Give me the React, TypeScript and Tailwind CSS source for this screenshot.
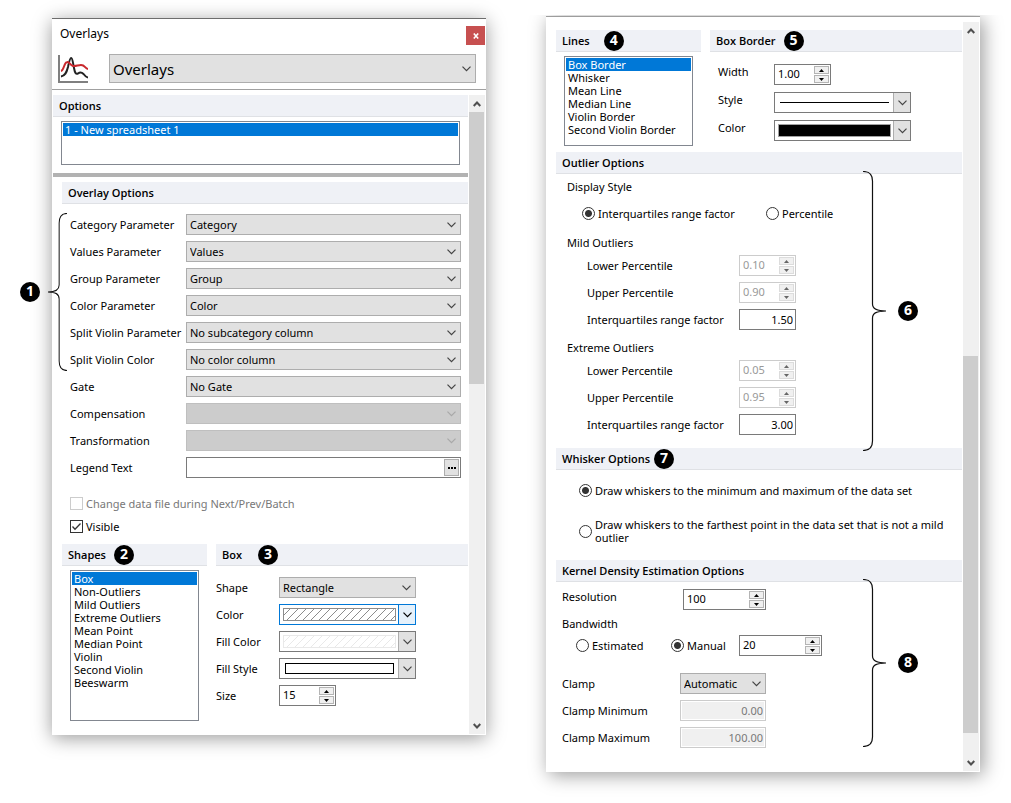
import { useId, type ReactNode } from "react";
import clsx from "clsx";

const SHAPES = [
  "Box",
  "Non-Outliers",
  "Mild Outliers",
  "Extreme Outliers",
  "Mean Point",
  "Median Point",
  "Violin",
  "Second Violin",
  "Beeswarm",
];

const LINES = ["Box Border", "Whisker", "Mean Line", "Median Line", "Violin Border", "Second Violin Border"];

const OVERLAY_FIELDS = [
  { label: "Category Parameter", value: "Category" },
  { label: "Values Parameter", value: "Values" },
  { label: "Group Parameter", value: "Group" },
  { label: "Color Parameter", value: "Color" },
  { label: "Split Violin Parameter", value: "No subcategory column" },
  { label: "Split Violin Color", value: "No color column" },
  { label: "Gate", value: "No Gate" },
  { label: "Compensation", value: "", disabled: true },
  { label: "Transformation", value: "", disabled: true },
];

function Chevron({ className }: { className?: string }) {
  return (
    <svg width="9" height="6" viewBox="0 0 9 6" fill="none" className={clsx("pointer-events-none", className)}>
      <path d="M.5 .7 4.5 4.7 8.5 .7" stroke="currentColor" strokeWidth="1.2" />
    </svg>
  );
}

function Badge({ n, className }: { n: number; className?: string }) {
  return (
    <span
      className={clsx(
        "flex h-5 w-5 shrink-0 items-center justify-center rounded-full bg-black pb-[2px] font-['Open_Sans',sans-serif] text-[14px] leading-4 font-bold text-white",
        className
      )}
    >
      {n}
    </span>
  );
}

function Brace({ height, flip }: { height: number; flip?: boolean }) {
  const mid = height / 2;
  const d = `M0 .5C7 .5 9.5 4 9.5 10V${mid - 7}C9.5 ${mid - 2} 14 ${mid} 23 ${mid}C14 ${mid} 9.5 ${mid + 2} 9.5 ${mid + 7}V${height - 10}C9.5 ${height - 4} 7 ${height - 0.5} 0 ${height - 0.5}`;
  return (
    <svg
      width={flip ? 19 : 23}
      height={height}
      viewBox={`0 0 23 ${height}`}
      preserveAspectRatio="none"
      fill="none"
      className={clsx("shrink-0", flip && "-scale-x-100")}
    >
      <path d={d} stroke="#111" strokeWidth="1.2" />
    </svg>
  );
}

function Heading({ children, badge, gap = "ml-2" }: { children: ReactNode; badge?: number; gap?: string }) {
  return (
    <div className="flex h-[22px] items-center border-b border-[#dfe1e5] bg-[#eff1f6] pl-[6px]">
      <h2 className="font-['Open_Sans',sans-serif] font-semibold">{children}</h2>
      {badge && <Badge n={badge} className={gap} />}
    </div>
  );
}

function Select({ id, value, disabled, className }: { id: string; value: string; disabled?: boolean; className?: string }) {
  return (
    <div className={clsx("relative", className)}>
      <select
        id={id}
        disabled={disabled}
        className="block h-[21px] w-full appearance-none border border-[#adadad] bg-[#e1e1e1] pl-[3px] leading-4 text-black opacity-100 disabled:border-[#bfbfbf] disabled:bg-[#ccc]"
      >
        <option>{value}</option>
      </select>
      <Chevron className={clsx("absolute top-2 right-[5px]", disabled ? "text-[#a8a8a8]" : "text-[#444]")} />
    </div>
  );
}

function ListBox({ label, items, className }: { label: string; items: string[]; className?: string }) {
  return (
    <select
      aria-label={label}
      size={items.length + 1}
      defaultValue={items[0]}
      className={clsx("block overflow-hidden border border-[#828790] bg-white p-px", className)}
    >
      {items.map((item) => (
        <option
          key={item}
          className="flex h-[13px] min-h-0 items-center overflow-visible px-[2px] py-0 leading-[13px] checked:bg-[linear-gradient(#0078d7,#0078d7)] checked:[-webkit-text-fill-color:#fff]"
        >
          {item}
        </option>
      ))}
    </select>
  );
}

function SpinButton({ up, disabled }: { up?: boolean; disabled?: boolean }) {
  return (
    <button
      type="button"
      aria-label={up ? "Increase" : "Decrease"}
      disabled={disabled}
      className={clsx(
        "flex h-2 w-[15px] items-center justify-center border bg-[#f0f0f0]",
        disabled ? "border-[#dcdcdc] text-[#666]" : "border-[#b4b4b4] text-black"
      )}
    >
      <svg width="5" height="3" viewBox="0 0 5 3" fill="currentColor">
        <path d={up ? "M0 3 2.5 0 5 3Z" : "M0 0 2.5 3 5 0Z"} />
      </svg>
    </button>
  );
}

function Spin({ id, label, value, disabled, className }: { id?: string; label?: string; value: string; disabled?: boolean; className?: string }) {
  return (
    <div
      className={clsx(
        "flex h-[21px] items-center border bg-white pr-px",
        disabled ? "border-[#ccc] text-[#999]" : "border-[#7a7a7a]",
        className
      )}
    >
      <input
        id={id}
        aria-label={label}
        defaultValue={value}
        disabled={disabled}
        className="w-0 min-w-0 flex-1 pb-px pl-[3px] leading-4 outline-none"
      />
      <div className="flex flex-col gap-px">
        <SpinButton up disabled={disabled} />
        <SpinButton disabled={disabled} />
      </div>
    </div>
  );
}

function DropSwatch({ id, active, children }: { id: string; active?: boolean; children: ReactNode }) {
  return (
    <button
      id={id}
      type="button"
      className={clsx("flex h-[21px] w-[137px] border bg-white", active ? "border-[#0078d7]" : "border-[#7a7a7a]")}
    >
      <span className="flex h-full flex-1 items-center justify-center">{children}</span>
      <span
        className={clsx(
          "flex h-full w-[17px] items-center justify-center border-l",
          active ? "border-[#0078d7] bg-[#e5f1fb] text-black" : "border-[#adadad] bg-[#e1e1e1] text-[#444]"
        )}
      >
        <Chevron />
      </span>
    </button>
  );
}

function Hatch({ color }: { color: string }) {
  const pattern = useId();
  return (
    <svg width="113" height="13" viewBox="0 0 113 13">
      <defs>
        <pattern id={pattern} width="8" height="8" patternUnits="userSpaceOnUse">
          <path d="M-1 9 9-1M-1 1 1-1M7 9 9 7" stroke={color} strokeWidth="1" />
        </pattern>
      </defs>
      <rect x=".5" y=".5" width="112" height="12" fill={`url(#${pattern})`} stroke={color} />
    </svg>
  );
}

function Radio({ name, children, checked, className }: { name: string; children: ReactNode; checked?: boolean; className?: string }) {
  return (
    <label className={clsx("flex items-center gap-[3px] leading-[13px]", className)}>
      <input
        type="radio"
        name={name}
        defaultChecked={checked}
        className="h-[13px] w-[13px] shrink-0 appearance-none rounded-full border border-[#333] bg-white checked:bg-[radial-gradient(circle,#333_3px,#fff_4px)]"
      />
      <span>{children}</span>
    </label>
  );
}

function Field({ label, id, width, top, children }: { label: string; id: string; width: string; top?: boolean; children: ReactNode }) {
  return (
    <div className={clsx("flex", top ? "items-start" : "items-center")}>
      <label htmlFor={id} className={clsx("shrink-0 leading-4 whitespace-nowrap", width)}>
        {label}
      </label>
      {children}
    </div>
  );
}

function ScrollBar({ before, thumb, after }: { before: string; thumb: string; after: string }) {
  return (
    <div className="mr-px ml-px flex w-4 shrink-0 flex-col bg-[#f0f0f0]">
      <button type="button" aria-label="Scroll up" className="flex h-[17px] w-full items-center justify-center">
        <svg width="8" height="6" viewBox="0 0 8 6" fill="none">
          <path d="M.7 5 4 1.5 7.3 5" stroke="#505050" strokeWidth="2" />
        </svg>
      </button>
      <div className={before} />
      <div className={clsx("mr-px bg-[#cdcdcd]", thumb)} />
      <div className={after} />
      <button type="button" aria-label="Scroll down" className="flex h-[17px] w-full items-center justify-center">
        <svg width="8" height="6" viewBox="0 0 8 6" fill="none">
          <path d="M.7 1 4 4.5 7.3 1" stroke="#505050" strokeWidth="2" />
        </svg>
      </button>
    </div>
  );
}

function OverlayIcon() {
  return (
    <svg width="30" height="28" viewBox="0 0 30 28" fill="none" className="shrink-0">
      <path d="M1 0V27H30" stroke="#808080" strokeWidth="2" />
      <path
        d="M3 21.5C7 21 8.5 18 10 12C11 7 12 3 13.2 3C14.5 3 15 8 16 13C17 18.5 18 19.5 20 18.5C22 17 24 17.5 25.5 19C27 21 28 22 30 22.5"
        stroke="#222"
        strokeWidth="2"
      />
      <path d="M3 16C6 15.5 6 7.5 9 7C11.5 6.5 12 10.5 15 11C18 11.5 20 10 23 10C27 10 27 13.5 30 14" stroke="#c8282d" strokeWidth="2" />
    </svg>
  );
}

function OverlaysPanel() {
  return (
    <section className="mt-[18px] min-w-0 flex-1 border-t border-[#6d6d6d] bg-white pb-px shadow-[0_3px_18px_rgba(0,0,0,0.4)]">
      <header className="border-b border-[#a0a0a0] pt-[7px] pb-[6px]">
        <div className="flex justify-between pr-px pl-2">
          <h1 className="text-[12px] leading-4">Overlays</h1>
          <button
            type="button"
            aria-label="Close"
            className="flex h-[19px] w-[19px] items-center justify-center bg-[#c75050] text-white"
          >
            <svg width="6" height="6" viewBox="0 0 6 6" fill="none">
              <path d="M.8 .5 5.2 5.5M5.2 .5 .8 5.5" stroke="currentColor" strokeWidth="1.6" />
            </svg>
          </button>
        </div>
        <div className="mt-[9px] flex items-center pr-[10px] pl-[6px]">
          <OverlayIcon />
          <div className="relative ml-[21px] flex-1">
            <select
              aria-label="Item"
              className="block h-[29px] w-full appearance-none border border-[#adadad] bg-[#e1e1e1] pl-[3px] text-[15px] leading-5"
            >
              <option>Overlays</option>
            </select>
            <Chevron className="absolute top-3 right-[5px] text-[#444]" />
          </div>
        </div>
      </header>

      <div className="flex pt-[5px] pl-px">
        <div className="min-w-0 flex-1">
          <Heading>Options</Heading>
          <div className="mx-2 mt-1">
            <ListBox label="Options" items={["1 - New spreadsheet 1"]} className="h-11 w-full" />
          </div>
          <div className="mt-2 h-1 bg-[#b2b2b2]" />

          <div className="mt-[5px] ml-[9px]">
            <Heading>Overlay Options</Heading>
            <div className="relative mt-[10px] flex flex-col gap-[6px] pr-[7px] pl-2">
              {OVERLAY_FIELDS.map((field, i) => (
                <Field key={field.label} label={field.label} id={`overlay-${i}`} width="w-[116px]">
                  <Select id={`overlay-${i}`} value={field.value} disabled={field.disabled} className="flex-1" />
                </Field>
              ))}
              <Field label="Legend Text" id="legend" width="w-[116px]">
                <div className="flex h-[21px] flex-1 items-center border border-[#7a7a7a] pr-px">
                  <input id="legend" className="min-w-0 flex-1 pl-1 leading-4 outline-none" />
                  <button
                    type="button"
                    aria-label="Edit legend text"
                    className="flex h-[17px] w-[15px] items-center justify-center border border-[#adadad] bg-[#e1e1e1]"
                  >
                    <svg width="8" height="2" viewBox="0 0 8 2">
                      <path d="M0 0h2v2H0zM3 0h2v2H3zM6 0h2v2H6z" />
                    </svg>
                  </button>
                </div>
              </Field>
              <div className="absolute -top-px -left-[42px] flex items-center gap-2">
                <Badge n={1} />
                <Brace height={158} flip />
              </div>
            </div>

            <div className="mt-[19px] flex flex-col gap-[10px] pl-2 leading-[13px]">
              <label className="flex items-center gap-[3px] text-[#787878]">
                <input type="checkbox" disabled className="h-[13px] w-[13px] appearance-none border border-[#ccc] bg-white" />
                Change data file during Next/Prev/Batch
              </label>
              <label className="flex items-center gap-[3px]">
                <span className="relative flex">
                  <input type="checkbox" defaultChecked className="h-[13px] w-[13px] appearance-none border border-[#333] bg-white" />
                  <svg viewBox="0 0 13 13" fill="none" className="pointer-events-none absolute inset-0">
                    <path d="M2.5 6.5 5 9.2 10.5 3.5" stroke="#333" strokeWidth="1.3" />
                  </svg>
                </span>
                Visible
              </label>
            </div>

            <div className="mt-[11px] grid grid-cols-[145px_1fr] gap-[9px] pb-[13px]">
              <div>
                <Heading badge={2}>Shapes</Heading>
                <ListBox label="Shapes" items={SHAPES} className="mt-1 ml-2 h-[151px] w-[129px]" />
              </div>
              <div>
                <Heading badge={3} gap="ml-4">
                  Box
                </Heading>
                <div className="flex flex-col gap-[6px] pt-[11px]">
                  <Field label="Shape" id="shape" width="w-[63px]">
                    <Select id="shape" value="Rectangle" className="w-[137px]" />
                  </Field>
                  <Field label="Color" id="box-color" width="w-[63px]">
                    <DropSwatch id="box-color" active>
                      <Hatch color="#8c8c8c" />
                    </DropSwatch>
                  </Field>
                  <Field label="Fill Color" id="fill-color" width="w-[63px]">
                    <DropSwatch id="fill-color">
                      <Hatch color="#e9e9e9" />
                    </DropSwatch>
                  </Field>
                  <Field label="Fill Style" id="fill-style" width="w-[63px]">
                    <DropSwatch id="fill-style">
                      <span className="h-[11px] w-[109px] border border-black" />
                    </DropSwatch>
                  </Field>
                  <Field label="Size" id="size" width="w-[63px]">
                    <Spin id="size" value="15" className="w-[57px]" />
                  </Field>
                </div>
              </div>
            </div>
          </div>
        </div>
        <ScrollBar before="flex-[0]" thumb="flex-[272]" after="flex-[333]" />
      </div>
    </section>
  );
}

function OutlierGroup({ title, lower, upper, factor }: { title: string; lower: string; upper: string; factor: string }) {
  const id = useId();
  return (
    <fieldset>
      <legend className="leading-4">{title}</legend>
      <div className="mt-1 flex flex-col gap-[6px] pl-5">
        <Field label="Lower Percentile" id={`${id}l`} width="w-[152px]">
          <Spin id={`${id}l`} value={lower} disabled className="w-[57px]" />
        </Field>
        <Field label="Upper Percentile" id={`${id}u`} width="w-[152px]">
          <Spin id={`${id}u`} value={upper} disabled className="w-[57px]" />
        </Field>
        <Field label="Interquartiles range factor" id={`${id}f`} width="w-[152px]">
          <input
            id={`${id}f`}
            defaultValue={factor}
            className="h-[21px] w-[57px] border border-[#7a7a7a] pr-[2px] pb-px text-right leading-4"
          />
        </Field>
      </div>
    </fieldset>
  );
}

function DetailsPanel() {
  return (
    <section className="mt-4 min-w-0 flex-1 border-t border-[#9d9d9d] bg-white pb-px shadow-[3px_3px_18px_rgba(0,0,0,0.4)] [clip-path:inset(-1px_-30px_-40px_-30px)]">
      <div className="flex pt-[5px] pl-[10px]">
        <div className="min-w-0 flex-1 pt-2 pb-[23px]">
          <div className="grid grid-cols-[145px_1fr] gap-[9px]">
            <div>
              <Heading badge={4} gap="ml-[14px]">
                Lines
              </Heading>
              <ListBox label="Lines" items={LINES} className="mt-1 ml-2 h-[90px] w-[129px]" />
            </div>
            <div>
              <Heading badge={5}>Box Border</Heading>
              <div className="flex flex-col gap-[7px] pt-3 pl-2">
                <Field label="Width" id="width" width="w-[56px]" top>
                  <Spin id="width" value="1.00" className="w-[57px]" />
                </Field>
                <Field label="Style" id="style" width="w-[56px]" top>
                  <DropSwatch id="style">
                    <span className="h-px w-[109px] bg-black" />
                  </DropSwatch>
                </Field>
                <Field label="Color" id="line-color" width="w-[56px]" top>
                  <DropSwatch id="line-color">
                    <span className="h-[13px] w-[113px] border border-[#a0a0a0] bg-black" />
                  </DropSwatch>
                </Field>
              </div>
            </div>
          </div>

          <div className="mt-[6px]">
            <Heading>Outlier Options</Heading>
            <div className="relative pt-[5px] pl-[11px]">
              <p className="leading-4">Display Style</p>
              <div className="mt-3 flex pl-[15px]">
                <Radio name="display" checked className="w-[184px]">
                  Interquartiles range factor
                </Radio>
                <Radio name="display">Percentile</Radio>
              </div>
              <div className="mt-[15px] flex flex-col gap-[10px]">
                <OutlierGroup title="Mild Outliers" lower="0.10" upper="0.90" factor="1.50" />
                <OutlierGroup title="Extreme Outliers" lower="0.05" upper="0.95" factor="3.00" />
              </div>
              <div className="absolute -top-[3px] left-[307px] flex items-center gap-3">
                <Brace height={280} />
                <Badge n={6} />
              </div>
            </div>
          </div>

          <div className="mt-[13px]">
            <Heading badge={7} gap="ml-1">
              Whisker Options
            </Heading>
            <div className="mt-[14px] flex flex-col gap-[21px] pl-[23px]">
              <Radio name="whisker" checked>
                Draw whiskers to the minimum and maximum of the data set
              </Radio>
              <Radio name="whisker" className="max-w-[375px]">
                Draw whiskers to the farthest point in the data set that is not a mild outlier
              </Radio>
            </div>
          </div>

          <div className="mt-4">
            <Heading>Kernel Density Estimation Options</Heading>
            <div className="relative pt-[7px] pl-[6px]">
              <Field label="Resolution" id="resolution" width="w-[121px]" top>
                <Spin id="resolution" value="100" className="w-[83px]" />
              </Field>
              <p className="mt-[6px] leading-4">Bandwidth</p>
              <div className="mt-[3px] flex items-center pl-[14px]">
                <Radio name="bandwidth" className="w-[95px]">
                  Estimated
                </Radio>
                <Radio name="bandwidth" checked className="w-[68px]">
                  Manual
                </Radio>
                <Spin label="Manual bandwidth" value="20" className="w-[83px]" />
              </div>
              <div className="mt-[17px] flex flex-col gap-[6px]">
                <Field label="Clamp" id="clamp" width="w-[118px]">
                  <Select id="clamp" value="Automatic" className="w-[86px]" />
                </Field>
                <Field label="Clamp Minimum" id="clamp-min" width="w-[118px]">
                  <input
                    id="clamp-min"
                    disabled
                    defaultValue="0.00"
                    className="h-[21px] w-[86px] border border-[#ccc] bg-[#f0f0f0] pr-[2px] pb-px text-right leading-4 text-[#787878] ring-1 ring-white ring-inset"
                  />
                </Field>
                <Field label="Clamp Maximum" id="clamp-max" width="w-[118px]">
                  <input
                    id="clamp-max"
                    disabled
                    defaultValue="100.00"
                    className="h-[21px] w-[86px] border border-[#ccc] bg-[#f0f0f0] pr-[2px] pb-px text-right leading-4 text-[#787878] ring-1 ring-white ring-inset"
                  />
                </Field>
              </div>
              <div className="absolute -top-[3px] left-[307px] flex items-center gap-3">
                <Brace height={168} />
                <Badge n={8} />
              </div>
            </div>
          </div>
        </div>
        <ScrollBar before="flex-[317]" thumb="flex-[376]" after="flex-[21]" />
      </div>
    </section>
  );
}

export default function App() {
  return (
    <main className="flex min-h-screen items-start gap-[60px] bg-white pr-[31px] pb-8 pl-[52px] font-['Noto_Sans',sans-serif] text-[11px] leading-4 text-black">
      <OverlaysPanel />
      <DetailsPanel />
    </main>
  );
}
